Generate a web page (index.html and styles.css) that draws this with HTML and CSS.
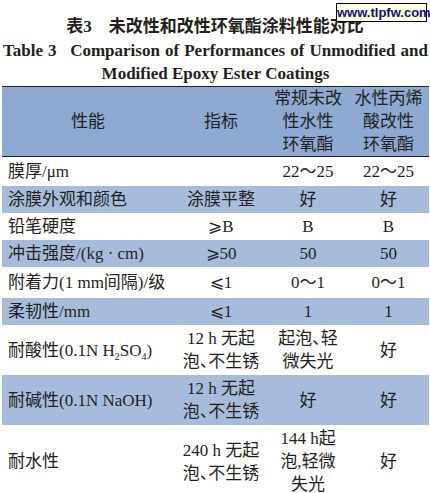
FILE: index.html
```html
<!DOCTYPE html>
<html lang="zh-CN">
<head>
    <meta charset="UTF-8">
    <title>表3 未改性和改性环氧酯涂料性能对比</title>
    <link rel="stylesheet" href="styles.css">
</head>
<body>
    <div class="watermark">www.tlpfw.com</div>

    <h1 class="caption-cn">表3&emsp;未改性和改性环氧酯涂料性能对比</h1>
    <p class="caption-en">
        <span class="en-line">Table 3&ensp; Comparison of Performances of Unmodified and</span>
        <span class="en-line last">Modified Epoxy Ester Coatings</span>
    </p>

    <table class="data-table">
        <thead>
            <tr>
                <th class="col-name">性能</th>
                <th class="col-spec">指标</th>
                <th class="col-a">常规未改<br>性水性<br>环氧酯</th>
                <th class="col-b">水性丙烯<br>酸改性<br>环氧酯</th>
            </tr>
        </thead>
        <tbody>
            <tr class="r1">
                <td class="name">膜厚/μm</td>
                <td></td>
                <td>22～25</td>
                <td>22～25</td>
            </tr>
            <tr class="band">
                <td class="name">涂膜外观和颜色</td>
                <td>涂膜平整</td>
                <td>好</td>
                <td>好</td>
            </tr>
            <tr>
                <td class="name">铅笔硬度</td>
                <td>⩾B</td>
                <td>B</td>
                <td>B</td>
            </tr>
            <tr class="band">
                <td class="name">冲击强度/(kg · cm)</td>
                <td>⩾50</td>
                <td>50</td>
                <td>50</td>
            </tr>
            <tr class="r5">
                <td class="name">附着力(1 mm间隔)/级</td>
                <td>⩽1</td>
                <td>0～1</td>
                <td>0～1</td>
            </tr>
            <tr class="band">
                <td class="name">柔韧性/mm</td>
                <td>⩽1</td>
                <td>1</td>
                <td>1</td>
            </tr>
            <tr>
                <td class="name">耐酸性(0.1N H<sub>2</sub>SO<sub>4</sub>)</td>
                <td>12 h 无起<br>泡、不生锈</td>
                <td>起泡、轻<br>微失光</td>
                <td>好</td>
            </tr>
            <tr class="band">
                <td class="name">耐碱性(0.1N NaOH)</td>
                <td>12 h 无起<br>泡、不生锈</td>
                <td>好</td>
                <td>好</td>
            </tr>
            <tr>
                <td class="name">耐水性</td>
                <td>240 h 无起<br>泡、不生锈</td>
                <td>144 h起<br>泡,轻微<br>失光</td>
                <td>好</td>
            </tr>
        </tbody>
    </table>
</body>
</html>
```

FILE: styles.css
```css
body {
    margin: 0;
    padding-top: 15px;
    background-color: #ffffff;
    color: #231f20;
    font-family: "Liberation Serif", "Noto Sans CJK SC", serif;
    font-size: 17px;
    font-feature-settings: "halt";
    position: relative;
}

.watermark {
    position: absolute;
    top: 3px;
    left: 336px;
    width: 89px;
    height: 17px;
    border: 1px solid #000;
    background-color: #ffffe1;
    color: #10107a;
    font-family: "Liberation Sans", sans-serif;
    font-weight: bold;
    font-size: 13px;
    line-height: 17px;
    text-align: center;
}

.caption-cn {
    margin: 0;
    font-size: 17px;
    font-weight: bold;
    line-height: 24px;
    text-align: center;
}

.caption-en {
    margin: 0 2px 0 3px;
    font-weight: bold;
    font-size: 17px;
    line-height: 23px;
}

.en-line {
    display: block;
    white-space: nowrap;
    text-align: justify;
    text-align-last: justify;
}

.en-line.last {
    text-align: center;
    text-align-last: center;
}

.data-table {
    margin: 1px 0 0 2px;
    width: 427px;
    border-collapse: collapse;
    table-layout: fixed;
    border-top: 1px solid #222;
}

.data-table th,
.data-table td {
    box-sizing: border-box;
    padding: 2px 0;
    line-height: 23px;
    text-align: center;
    vertical-align: middle;
    font-weight: normal;
}

.col-name { width: 172px; }
.col-spec { width: 94px; }
.col-a { width: 80px; }
.col-b { width: 81px; }

.data-table .name {
    text-align: left;
    padding-left: 6px;
}

.data-table thead tr {
    background-color: #8eaad2;
    border-bottom: 1px solid #222;
}

.data-table thead th {
    padding: 0;
    height: 69px;
}

.band {
    background-color: #a7bcdc;
}

.r1 td { padding-top: 3px; padding-bottom: 3px; }
.r5 td { padding-top: 4px; padding-bottom: 4px; }

sub {
    font-size: 10px;
    line-height: 0;
}
```
